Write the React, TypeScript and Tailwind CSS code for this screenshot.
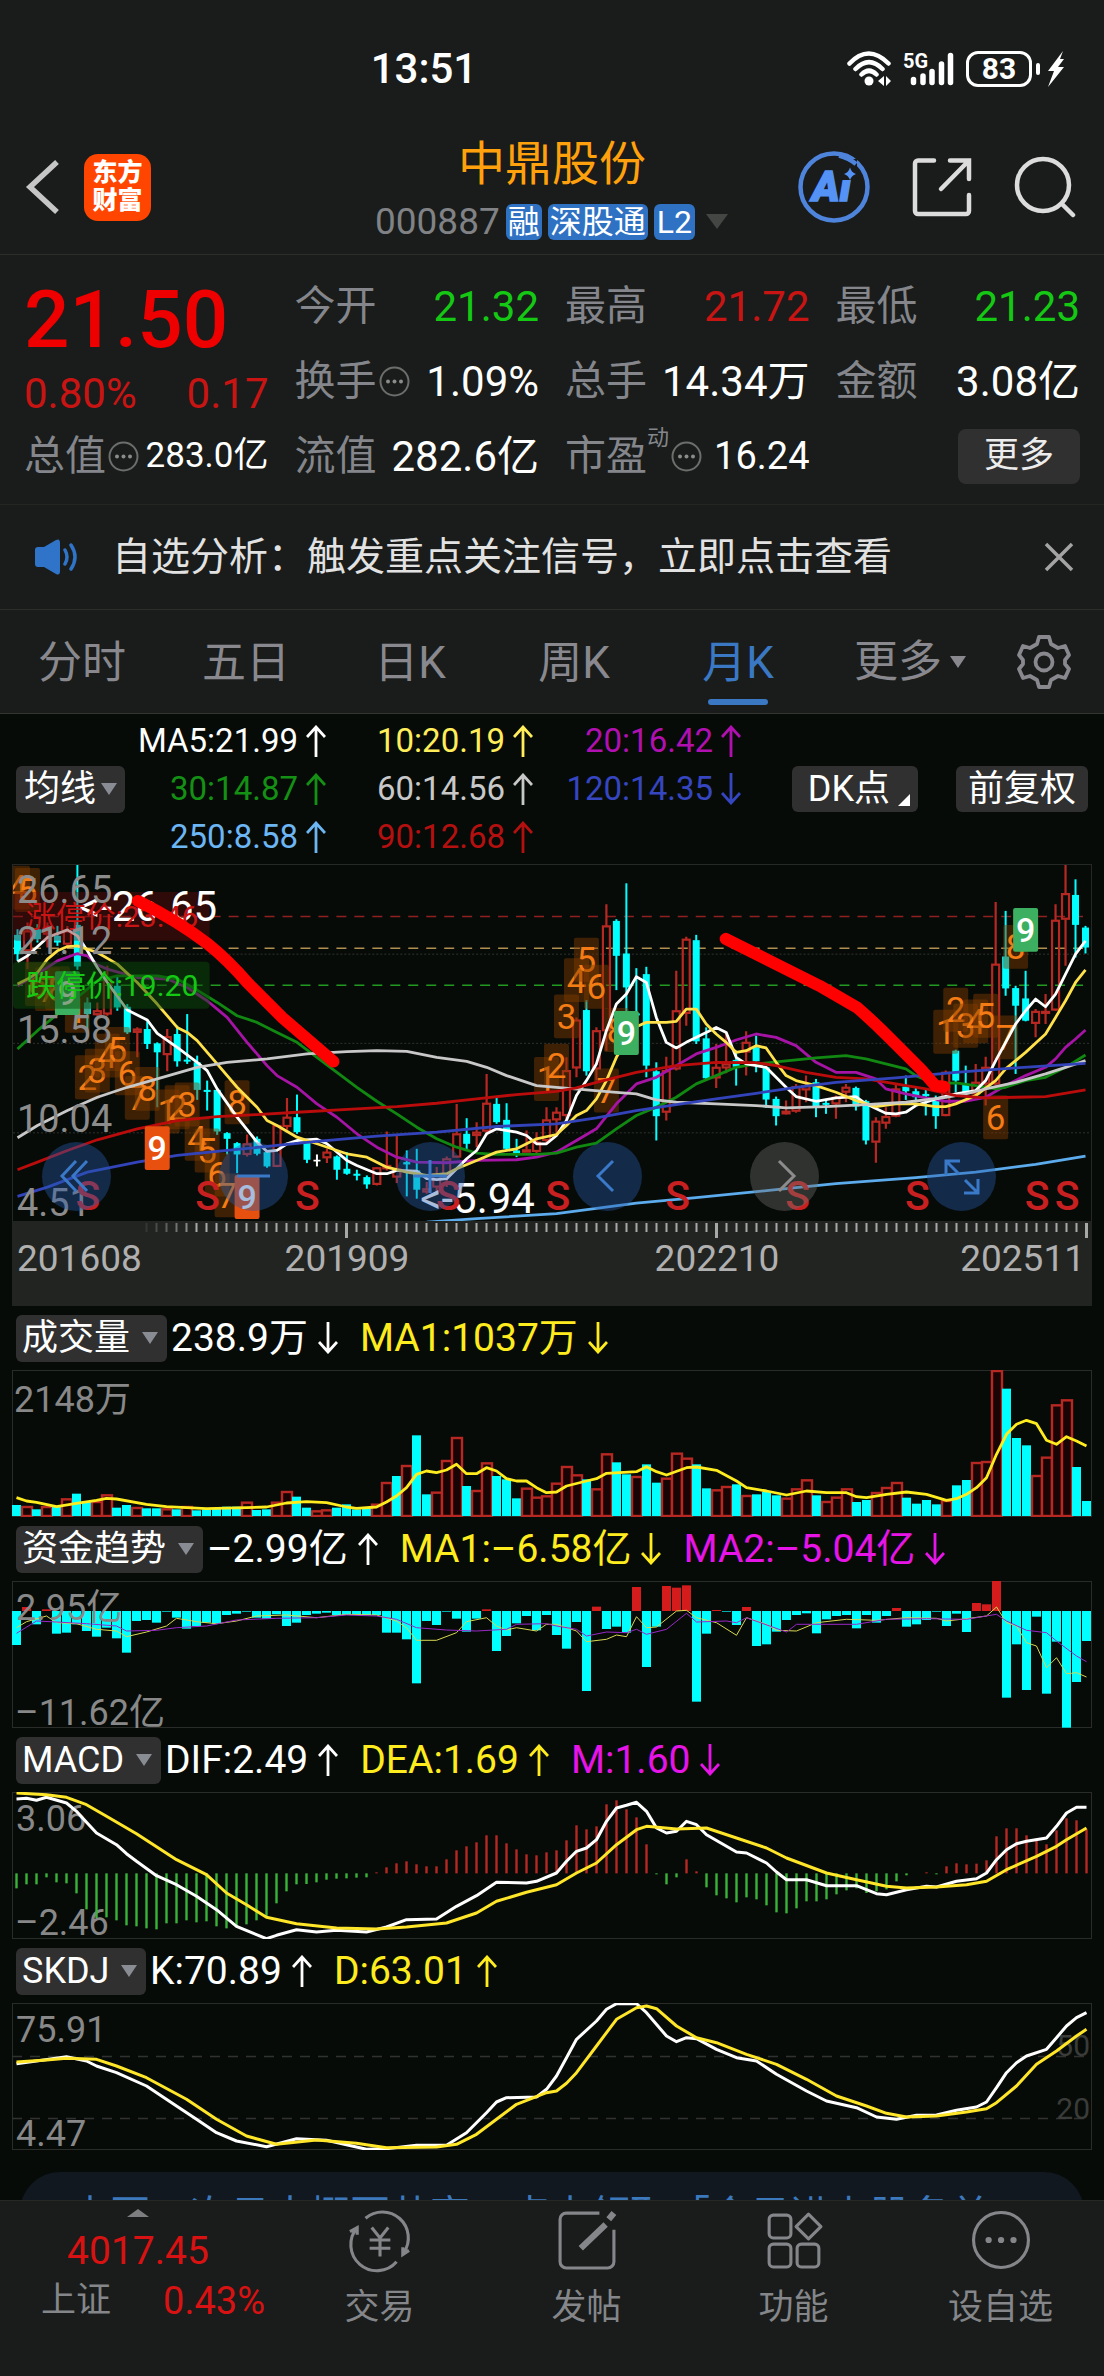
import type { ReactNode } from "react";
import { useState } from "react";

type Point = [index: number, value: number];
type Tone = "up" | "down" | "flat";
type Candle = [tone: Tone, high: number, top: number, bottom: number, low: number];

const CHART_WIDTH = 1080;
const CYAN = "#00ffff";
const RED = "#b82822";

// One month every 10 units, the first one centred at 4.5
const toX = (index: number) => 4.5 + index * 10;

// Chart values are stored in thirds of a unit, counted down from `top`
const toY = (value: number, top: number) => (value - top) / 3;

function toPath(points: Point[], top: number) {
	return points
		.map(([i, v], n) => `${n === 0 ? "M" : "L"}${toX(i)} ${toY(v, top).toFixed(1)}`)
		.join("");
}

const U: Tone = "up";
const D: Tone = "down";
const F: Tone = "flat";

const CANDLES: Candle[] = [
	[D, 235, 252, 310, 330], [U, 215, 240, 300, 355], [D, 220, 235, 265, 275], [U, 215, 240, 250, 290],
	[D, 225, 255, 275, 285], [U, 225, 240, 280, 290], [D, 42, 222, 347, 357], [D, 440, 455, 490, 540],
	[U, 455, 480, 492, 495], [U, 345, 385, 490, 495], [D, 375, 405, 470, 480], [D, 460, 468, 545, 550],
	[U, 530, 535, 545, 620], [D, 505, 535, 580, 595], [D, 575, 578, 605, 770], [U, 535, 558, 612, 662],
	[D, 525, 550, 632, 648], [D, 490, 627, 633, 640], [D, 615, 635, 718, 748], [D, 690, 718, 724, 780],
	[D, 715, 718, 843, 853], [D, 845, 848, 865, 912], [D, 875, 878, 912, 968], [U, 852, 880, 912, 918],
	[D, 858, 865, 910, 915], [D, 900, 905, 948, 952], [U, 825, 825, 948, 950], [U, 742, 800, 828, 838],
	[D, 732, 800, 845, 850], [D, 870, 875, 928, 938], [F, 912, 928, 933, 948], [U, 895, 905, 922, 938],
	[D, 915, 918, 958, 988], [D, 905, 955, 970, 973], [D, 958, 970, 976, 990], [D, 975, 980, 1002, 1015],
	[U, 950, 952, 1002, 1005], [U, 843, 945, 955, 960], [U, 855, 955, 980, 998], [D, 900, 935, 942, 1038],
	[D, 895, 960, 1018, 1045], [U, 995, 1015, 1025, 1030], [U, 950, 970, 1010, 1025], [U, 918, 925, 975, 1010],
	[U, 760, 850, 920, 922], [D, 803, 850, 880, 900], [U, 815, 845, 855, 890], [U, 670, 758, 842, 855],
	[D, 742, 760, 815, 820], [D, 758, 808, 895, 900], [D, 865, 900, 912, 920], [U, 840, 898, 905, 905],
	[U, 845, 875, 903, 910], [U, 770, 808, 870, 880], [U, 770, 785, 808, 850], [U, 620, 660, 795, 820],
	[U, 500, 508, 652, 680], [D, 448, 478, 662, 675], [U, 530, 540, 655, 690], [U, 160, 225, 540, 600],
	[D, 205, 210, 315, 418], [D, 97, 308, 410, 485], [D, 352, 488, 494, 505], [D, 348, 370, 645, 680],
	[D, 635, 662, 797, 870], [U, 618, 660, 785, 810], [U, 360, 480, 655, 660], [U, 258, 265, 488, 525],
	[D, 252, 268, 572, 580], [D, 530, 563, 683, 685], [U, 580, 650, 682, 712], [U, 545, 640, 652, 668],
	[D, 600, 628, 648, 705], [U, 542, 575, 604, 675], [D, 555, 590, 632, 665], [D, 648, 650, 747, 772],
	[D, 738, 745, 797, 825], [U, 750, 782, 790, 792], [U, 700, 708, 782, 787], [U, 675, 705, 718, 755],
	[D, 685, 695, 768, 800], [D, 745, 757, 763, 790], [U, 735, 740, 760, 805], [U, 700, 710, 725, 755],
	[D, 708, 712, 768, 780], [D, 748, 752, 870, 882], [U, 800, 812, 875, 937], [U, 770, 798, 818, 835],
	[U, 700, 715, 797, 800], [D, 675, 708, 722, 748], [D, 712, 722, 740, 755], [D, 718, 730, 737, 795],
	[D, 735, 750, 797, 835], [U, 660, 665, 795, 797], [D, 597, 600, 690, 725], [D, 645, 700, 730, 740],
	[U, 640, 695, 730, 740], [U, 618, 650, 700, 765], [U, 153, 340, 700, 705], [D, 180, 317, 413, 435],
	[D, 405, 412, 465, 670], [D, 360, 443, 510, 512], [U, 475, 482, 518, 560], [U, 430, 482, 487, 520],
	[U, 160, 208, 478, 480], [U, 42, 128, 205, 345], [D, 85, 132, 222, 320], [D, 225, 230, 290, 308],
];

const MA_LINES: { name: string; color: string; points: Point[] }[] = [
	{ name: "MA250", color: "#5cabec", points: [[41, 1115], [46, 1105], [54, 1090], [62, 1058], [68, 1042], [76, 1018], [82, 1000], [90, 982], [96, 965], [102, 942], [107, 917]] },
	{ name: "MA20", color: "#a614a6", points: [[0, 405], [2, 370], [4, 330], [6, 308], [7, 315], [8, 342], [9, 355], [12, 380], [15, 385], [17, 410], [19, 450], [21, 500], [23, 575], [25, 645], [26, 675], [28, 710], [30, 760], [32, 800], [34, 850], [36, 890], [38, 920], [40, 935], [43, 937], [46, 930], [50, 928], [52, 920], [54, 905], [56, 870], [58, 835], [60, 760], [62, 700], [64, 680], [66, 645], [68, 610], [70, 590], [72, 568], [74, 550], [76, 560], [78, 585], [80, 635], [82, 665], [84, 665], [86, 685], [87, 715], [89, 730], [91, 742], [93, 752], [95, 752], [97, 740], [99, 705], [101, 675], [103, 650], [104, 625], [105, 590], [106, 565], [107, 538]] },
	{ name: "MA30", color: "#118811", points: [[0, 595], [2, 540], [4, 490], [6, 440], [8, 390], [10, 375], [14, 375], [16, 385], [18, 418], [20, 455], [22, 495], [24, 515], [26, 545], [28, 575], [30, 620], [32, 665], [34, 710], [36, 752], [38, 790], [40, 830], [42, 865], [44, 890], [46, 908], [48, 912], [52, 912], [54, 908], [56, 890], [58, 878], [60, 835], [62, 795], [64, 770], [66, 740], [68, 700], [70, 675], [72, 650], [74, 640], [78, 628], [80, 622], [83, 615], [85, 625], [87, 640], [89, 655], [90, 675], [92, 700], [94, 697], [96, 705], [98, 715], [99, 710], [101, 690], [103, 680], [105, 650], [107, 613]] },
	{ name: "MA5", color: "#ffffff", points: [[0, 333], [1, 315], [3, 260], [4, 248], [5, 237], [6, 255], [7, 300], [8, 350], [9, 395], [11, 478], [13, 508], [14, 548], [16, 590], [18, 635], [19, 660], [20, 715], [22, 800], [24, 875], [25, 903], [26, 900], [27, 880], [28, 870], [30, 866], [31, 880], [33, 930], [34, 945], [36, 970], [37, 970], [38, 960], [40, 962], [41, 985], [42, 988], [43, 985], [45, 925], [46, 900], [47, 850], [48, 835], [50, 845], [51, 855], [52, 880], [53, 880], [54, 855], [55, 810], [56, 735], [57, 690], [58, 640], [59, 540], [60, 460], [61, 430], [62, 378], [63, 395], [64, 500], [65, 575], [66, 592], [67, 575], [69, 545], [70, 530], [71, 545], [72, 620], [73, 640], [74, 645], [75, 650], [77, 710], [78, 738], [80, 752], [82, 742], [84, 738], [85, 760], [87, 788], [88, 790], [89, 785], [90, 765], [91, 755], [92, 745], [94, 730], [96, 720], [97, 690], [98, 630], [99, 575], [100, 520], [101, 480], [102, 445], [103, 468], [104, 430], [105, 370], [106, 310], [107, 270]] },
	{ name: "MA10", color: "#ffe14a", points: [[0, 400], [1, 385], [2, 365], [3, 325], [4, 300], [5, 287], [6, 285], [8, 305], [10, 340], [12, 395], [14, 460], [16, 530], [17, 545], [18, 570], [20, 640], [22, 710], [24, 770], [25, 810], [26, 825], [28, 860], [30, 880], [32, 900], [33, 910], [35, 920], [37, 950], [39, 965], [41, 975], [43, 970], [44, 955], [46, 930], [48, 905], [50, 895], [52, 865], [54, 852], [55, 825], [56, 795], [57, 780], [58, 745], [59, 690], [60, 620], [61, 570], [62, 528], [63, 515], [65, 515], [66, 512], [67, 475], [68, 475], [69, 520], [70, 550], [71, 575], [72, 605], [73, 600], [74, 585], [75, 592], [76, 635], [77, 675], [78, 690], [80, 705], [82, 725], [84, 750], [86, 768], [88, 760], [90, 760], [92, 768], [93, 768], [94, 760], [96, 735], [98, 690], [99, 655], [101, 605], [103, 550], [104, 500], [105, 450], [106, 395], [107, 357]] },
	{ name: "MA60", color: "#c8c8c8", points: [[0, 862], [2, 825], [5, 780], [8, 740], [11, 710], [14, 685], [18, 650], [21, 635], [25, 625], [29, 610], [33, 603], [36, 600], [39, 602], [42, 620], [45, 632], [47, 650], [49, 675], [52, 705], [54, 710], [57, 718], [60, 725], [62, 730], [64, 748], [66, 755], [70, 760], [74, 765], [77, 772], [81, 768], [85, 762], [89, 755], [93, 740], [95, 730], [97, 715], [100, 695], [103, 670], [105, 650], [107, 630]] },
	{ name: "MA90", color: "#bb0c0c", points: [[0, 958], [2, 935], [5, 900], [8, 868], [12, 835], [16, 810], [20, 798], [24, 792], [28, 785], [34, 775], [38, 768], [42, 758], [46, 745], [50, 732], [54, 722], [56, 712], [58, 695], [62, 665], [66, 645], [70, 635], [74, 636], [76, 645], [79, 665], [82, 680], [85, 685], [88, 700], [91, 715], [94, 735], [97, 742], [100, 740], [103, 738], [107, 718]] },
	{ name: "MA120", color: "#3344bb", points: [[0, 1038], [3, 1010], [7, 965], [12, 935], [16, 915], [21, 900], [25, 888], [30, 873], [36, 857], [42, 845], [48, 828], [54, 820], [58, 802], [62, 780], [66, 762], [70, 745], [74, 728], [78, 710], [82, 695], [88, 682], [94, 665], [100, 652], [107, 638]] },
];

// Nine-turn counts: month, vertical centre, digit
const COUNTS: [number, number, string][] = [
	[0, 110, "4"], [1, 117, "5"], [2, 400, "6"], [3, 415, "7"], [4, 412, "8"], [6, 480, "1"],
	[7, 680, "2"], [8, 660, "3"], [9, 615, "4"], [10, 595, "5"], [11, 668, "6"], [12, 742, "7"], [13, 715, "8"],
	[15, 783, "1"], [16, 770, "2"], [17, 762, "3"], [18, 865, "4"], [19, 900, "5"], [20, 972, "6"], [21, 1035, "7"], [22, 755, "8"],
	[53, 685, "1"], [54, 645, "2"], [55, 497, "3"], [56, 388, "4"], [57, 327, "5"], [58, 408, "6"], [59, 720, "7"], [60, 538, "8"],
	[93, 543, "1"], [94, 477, "2"], [95, 525, "3"], [96, 512, "4"], [97, 495, "5"], [98, 800, "6"], [99, 560, "7"], [100, 288, "8"],
];

const NINES: [number, number, string][] = [
	[5, 427, "#3cb060"], [14, 893, "#e8500f"], [23, 1040, "#e8500f"], [61, 547, "#3cb060"], [101, 237, "#3cb060"],
];

const S_MARKS = [75, 195, 295, 436, 546, 666, 786, 906, 1026, 1056];

const VOLUME_TOPS = [
	612, 615, 625, 615, 618, 592, 578, 600, 600, 580, 620, 612, 618, 622, 622, 622, 625, 615, 628, 625,
	622, 617, 617, 602, 627, 625, 602, 570, 587, 620, 628, 625, 620, 610, 625, 622, 608, 543, 525, 492,
	403, 580, 572, 477, 408, 555, 567, 484, 525, 535, 592, 560, 587, 583, 545, 495, 520, 535, 562, 457,
	484, 520, 525, 490, 545, 530, 455, 470, 490, 562, 565, 555, 550, 582, 580, 572, 583, 590, 562, 535,
	583, 600, 587, 562, 603, 597, 573, 558, 543, 590, 608, 597, 610, 597, 553, 537, 483, 480, 207, 263,
	411, 433, 522, 467, 310, 295, 498, 600,
];

const VOLUME_UP = new Set([
	1, 3, 5, 8, 9, 12, 15, 17, 23, 26, 27, 30, 31, 36, 37, 39, 42, 43, 44, 46, 47, 51, 52, 53, 54, 55, 56, 58, 59, 62, 65, 66,
	67, 70, 71, 73, 77, 78, 79, 81, 82, 83, 86, 87, 88, 93, 96, 97, 98, 102, 103, 104, 105,
]);

const VOLUME_MA: Point[] = [[0, 590], [1, 600], [2, 604], [4, 617], [6, 607], [8, 598], [9, 592], [10, 594], [13, 610], [15, 617], [19, 623], [23, 620], [25, 618], [27, 606], [29, 602], [31, 605], [33, 618], [34, 622], [36, 618], [37, 603], [38, 585], [39, 560], [40, 520], [41, 510], [42, 515], [43, 507], [44, 490], [45, 518], [46, 518], [47, 500], [48, 510], [49, 533], [50, 540], [51, 540], [52, 560], [53, 575], [54, 573], [55, 555], [57, 540], [58, 533], [59, 517], [62, 512], [63, 497], [64, 512], [65, 522], [67, 500], [68, 498], [70, 508], [72, 540], [73, 560], [75, 570], [77, 582], [79, 570], [81, 575], [83, 575], [84, 587], [85, 590], [87, 580], [89, 573], [91, 580], [93, 598], [94, 593], [95, 580], [96, 560], [97, 530], [98, 460], [99, 400], [100, 370], [101, 358], [102, 368], [103, 418], [104, 430], [105, 407], [106, 420], [107, 435]];

const FUND_ENDS = [
	1032, 918, 970, 925, 998, 995, 970, 990, 1007, 980, 1012, 1055, 960, 957, 965, 932, 950, 983, 975, 965,
	968, 942, 938, 932, 950, 953, 940, 975, 965, 942, 938, 935, 942, 942, 942, 942, 942, 995, 995, 1015,
	1147, 960, 972, 932, 953, 992, 953, 925, 1050, 1005, 967, 945, 988, 942, 1002, 1043, 963, 1170, 917, 984,
	977, 995, 858, 1098, 977, 855, 860, 853, 1202, 998, 927, 932, 972, 918, 1035, 1030, 992, 957, 942, 937,
	997, 955, 945, 942, 982, 942, 965, 945, 921, 977, 970, 957, 932, 975, 938, 993, 906, 910, 840, 1190,
	1030, 1167, 947, 1178, 1022, 1280, 1143, 1020,
];

const FUND_MA1: Point[] = [[0, 980], [1, 962], [3, 945], [4, 965], [6, 968], [8, 985], [10, 990], [11, 1007], [13, 993], [15, 975], [16, 952], [18, 962], [20, 968], [22, 960], [24, 945], [27, 942], [30, 950], [33, 940], [36, 942], [38, 960], [39, 980], [40, 1018], [42, 1018], [44, 995], [45, 962], [47, 950], [48, 975], [49, 987], [50, 980], [52, 990], [53, 970], [54, 970], [56, 990], [57, 1022], [59, 1015], [60, 1002], [61, 1007], [62, 947], [63, 980], [64, 978], [66, 930], [67, 928], [68, 950], [70, 965], [72, 1003], [73, 950], [75, 970], [76, 988], [78, 990], [80, 965], [83, 955], [86, 958], [89, 950], [92, 952], [93, 960], [95, 953], [97, 945], [98, 918], [99, 965], [100, 975], [101, 1025], [102, 1035], [103, 1100], [104, 1070], [105, 1118], [106, 1115], [107, 1128]];

const FUND_MA2: Point[] = [[0, 997], [2, 960], [4, 963], [7, 968], [10, 975], [11, 990], [14, 988], [16, 980], [19, 975], [22, 957], [26, 952], [30, 950], [33, 942], [36, 945], [38, 955], [40, 980], [43, 987], [46, 990], [49, 985], [50, 970], [53, 968], [54, 975], [56, 985], [57, 1005], [59, 993], [61, 995], [62, 985], [63, 1000], [65, 985], [67, 937], [68, 963], [71, 960], [72, 965], [73, 950], [77, 993], [78, 970], [81, 970], [84, 970], [87, 955], [91, 953], [95, 955], [98, 940], [99, 960], [101, 988], [103, 995], [104, 1020], [106, 1065], [107, 1082]];

const MACD_ENDS = [
	456, 444, 444, 423, 438, 441, 471, 519, 545, 543, 552, 567, 570, 576, 579, 561, 561, 552, 558, 555,
	570, 576, 570, 564, 552, 540, 501, 465, 444, 443, 438, 430, 427, 426, 424, 423, 408, 393, 381, 375,
	384, 390, 390, 369, 342, 330, 318, 297, 297, 321, 339, 354, 357, 348, 342, 312, 267, 279, 270, 204,
	192, 219, 243, 324, 414, 444, 423, 369, 405, 453, 477, 486, 498, 483, 489, 507, 528, 531, 516, 495,
	495, 489, 474, 462, 456, 470, 465, 459, 435, 417, 411, 408, 414, 390, 381, 384, 382, 372, 300, 276,
	276, 297, 309, 324, 282, 246, 252, 279,
];

const MACD_DIF: Point[] = [[0, 188], [1, 186], [2, 192], [3, 183], [5, 200], [6, 225], [7, 258], [8, 290], [10, 325], [11, 352], [12, 375], [14, 418], [16, 445], [18, 480], [20, 520], [22, 570], [24, 595], [25, 607], [26, 597], [28, 580], [30, 587], [32, 582], [35, 587], [37, 572], [39, 550], [42, 548], [44, 510], [46, 478], [48, 438], [51, 440], [52, 435], [54, 410], [55, 375], [56, 345], [57, 335], [58, 310], [59, 255], [60, 215], [61, 207], [62, 198], [63, 225], [64, 275], [65, 290], [66, 285], [67, 255], [68, 265], [69, 295], [71, 330], [72, 347], [73, 350], [75, 380], [76, 407], [77, 430], [79, 430], [81, 448], [84, 448], [86, 472], [87, 475], [89, 460], [91, 450], [92, 452], [94, 435], [96, 427], [97, 410], [98, 370], [99, 340], [100, 322], [101, 315], [103, 305], [104, 270], [105, 230], [106, 213], [107, 213]];

const MACD_DEA: Point[] = [[0, 170], [3, 175], [5, 183], [7, 205], [9, 240], [12, 292], [16, 370], [19, 415], [21, 470], [23, 505], [25, 543], [28, 562], [32, 575], [36, 578], [39, 572], [43, 560], [46, 530], [48, 495], [51, 468], [54, 445], [56, 410], [58, 380], [60, 325], [62, 280], [63, 270], [66, 278], [69, 275], [72, 305], [75, 335], [77, 365], [81, 410], [84, 430], [87, 450], [89, 455], [92, 452], [95, 445], [97, 435], [99, 400], [102, 360], [104, 330], [105, 310], [107, 275]];

const SKDJ_K: Point[] = [[0, 983], [2, 975], [5, 962], [7, 975], [8, 990], [10, 1010], [13, 1050], [16, 1110], [18, 1150], [20, 1190], [22, 1215], [25, 1232], [28, 1208], [31, 1213], [35, 1240], [37, 1238], [40, 1228], [43, 1228], [45, 1190], [47, 1130], [48, 1098], [49, 1085], [52, 1083], [53, 1060], [54, 1020], [55, 965], [56, 910], [58, 855], [59, 820], [60, 803], [62, 803], [63, 830], [65, 900], [66, 917], [67, 905], [68, 908], [70, 940], [72, 965], [74, 975], [76, 1015], [79, 1065], [81, 1095], [84, 1115], [86, 1143], [88, 1150], [90, 1138], [92, 1137], [94, 1123], [96, 1113], [97, 1098], [98, 1055], [99, 1010], [100, 980], [101, 960], [103, 940], [104, 905], [105, 870], [106, 845], [107, 830]];

const SKDJ_D: Point[] = [[0, 978], [3, 972], [5, 967], [8, 970], [10, 990], [13, 1025], [17, 1090], [20, 1150], [23, 1200], [26, 1225], [30, 1212], [34, 1222], [37, 1235], [42, 1233], [44, 1225], [46, 1195], [48, 1150], [50, 1105], [53, 1070], [54, 1065], [55, 1042], [56, 1010], [58, 930], [60, 850], [62, 815], [63, 810], [64, 818], [66, 870], [68, 905], [70, 920], [73, 955], [76, 985], [79, 1030], [82, 1080], [85, 1110], [87, 1132], [89, 1143], [92, 1140], [95, 1128], [97, 1118], [98, 1100], [100, 1050], [102, 985], [104, 945], [106, 900], [107, 880]];

function StatusBar() {
	return (
		<div className="grid grid-cols-3 items-center pt-[43px] pr-10 pb-[17px] pl-6 text-white">
			<span />
			<span className="text-[42px] leading-[52px] font-medium">13:51</span>
			<div className="flex items-center justify-end gap-3">
				<svg className="h-9 w-11" viewBox="0 0 44 36" fill="none" stroke="currentColor" strokeWidth="4.500" strokeLinecap="round">
					<path d="M2.500 12.500Q21.500 -7.500 41.500 12.500M8.500 18Q22 4.500 35.500 18M14.500 23.500Q22 16 29.500 23.500" />
					<circle cx="22" cy="30" r="4.500" fill="currentColor" stroke="none" />
					<path d="M37 25v10l-6-5zM39 25v10l5-5z" fill="currentColor" stroke="none" />
				</svg>
				<svg className="h-9 w-[51px] overflow-visible" viewBox="0 0 51 36" fill="none" stroke="currentColor" strokeWidth="5.500" strokeLinecap="round">
					<text x="0" y="17" fontSize="20" fontWeight="700" fill="currentColor" stroke="none">5G</text>
					<path d="M10.500 28.500v3M20 25v6.500M29 20.500v11M38.500 13v18.500M47.500 4.500v27" />
				</svg>
				<div className="flex items-center gap-1">
					<span className="flex h-9 w-[66px] items-center justify-center rounded-xl border-3 border-white text-[30px] leading-8 font-bold">83</span>
					<span className="h-3 w-1 rounded-full bg-white" />
					<svg className="ml-1 h-9 w-4" viewBox="0 0 16 36" fill="currentColor" aria-hidden="true">
						<path d="M15 0L0 20h6L0 36l16-20H10l6-8h-4z" />
					</svg>
				</div>
			</div>
		</div>
	);
}

function Header() {
	return (
		<header className="grid h-[143px] grid-cols-[1fr_auto_1fr] items-center border-b border-[#2c2e2c] px-6 pt-2">
			<div className="flex items-center gap-6">
				<button type="button" aria-label="返回" className="text-[#c6c6c6]">
					<svg className="h-14 w-9" viewBox="0 0 36 56" fill="none" stroke="currentColor" strokeWidth="5.500">
						<path d="M33 3L6 28l27 25" />
					</svg>
				</button>
				<a href="#home" className="flex size-[67px] flex-col items-center justify-center rounded-[14px] bg-[#ff4500] text-[25px] leading-7 font-black text-white">
					<span>东方</span>
					<span>财富</span>
				</a>
			</div>

			<div className="flex flex-col items-center gap-[10px]">
				<h1 className="text-[47px] leading-[60px] text-[#ffa10c]">中鼎股份</h1>
				<div className="flex items-center gap-[6px] text-[32px] leading-9 text-white">
					<span className="text-[37px] text-[#808285]">000887</span>
					<span className="rounded-md bg-[#2f72c4] px-[2px]">融</span>
					<span className="rounded-md bg-[#2f72c4] px-[2px]">深股通</span>
					<span className="rounded-md bg-[#2f72c4] px-[3px]">L2</span>
					<svg className="ml-1 h-4 w-6" viewBox="0 0 24 16" fill="#444644" aria-hidden="true">
						<path d="M1 0h22L12 15z" />
					</svg>
				</div>
			</div>

			<div className="flex items-center justify-end gap-[42px] pr-1">
				<button type="button" aria-label="AI">
					<svg className="size-[72px]" viewBox="0 0 72 72" fill="none">
						<circle cx="36" cy="36" r="33.500" stroke="#4f84dc" strokeWidth="4.500" />
						<text x="14" y="50" fontSize="42" fontWeight="900" fontStyle="italic" fill="#5592f5" stroke="#5592f5" strokeWidth="1.500">Ai</text>
						<path d="M41 8h18v21H41z" fill="#191c1a" />
						<path d="M52 16.500q1.500 5 6 6.500-4.500 1.500-6 6-1.500-4.500-6-6 4.500-1.500 6-6.500z" fill="#5592f5" />
						<path d="M41 4.500Q51 7 58 13" stroke="#4f84dc" strokeWidth="4.500" />
					</svg>
				</button>
				<button type="button" aria-label="分享" className="text-[#dcdcdc]">
					<svg className="size-[60px]" viewBox="0 0 60 60" fill="none" stroke="currentColor" strokeWidth="4.500" strokeLinecap="round">
						<path d="M22 3.500H6a3 3 0 0 0-3 3V54a3 3 0 0 0 3 3h48a3 3 0 0 0 3-3V38M38 3.500h19V22M56 4.500L29 32" />
					</svg>
				</button>
				<button type="button" aria-label="搜索" className="text-[#dcdcdc]">
					<svg className="size-[62px]" viewBox="0 0 62 62" fill="none" stroke="currentColor" strokeWidth="4.500" strokeLinecap="round">
						<circle cx="29" cy="29" r="26" />
						<path d="M48 48l11 11" />
					</svg>
				</button>
			</div>
		</header>
	);
}

function InfoDots() {
	return (
		<svg className="mx-[2px] size-[31px] shrink-0" viewBox="0 0 31 31" fill="none" aria-hidden="true">
			<circle cx="15.500" cy="15.500" r="14" stroke="#6c6e6c" strokeWidth="2" />
			<g fill="#8a8c8a">
				<circle cx="9" cy="15.500" r="2" />
				<circle cx="15.500" cy="15.500" r="2" />
				<circle cx="22" cy="15.500" r="2" />
			</g>
		</svg>
	);
}

function Quote({ label, value, className, extra }: { label: string; value: string; className: string; extra?: ReactNode }) {
	return (
		<div className="flex h-[75px] items-center justify-between whitespace-nowrap">
			<dt className="flex items-center text-[41px] text-[#84868c]">
				{label}
				{extra}
			</dt>
			<dd className={className}>{value}</dd>
		</div>
	);
}

function QuotePanel() {
	const value = "text-[42px] text-white";
	return (
		<section className="border-b border-[#232623] px-6 pt-[14px] pb-[10px]">
			<dl className="grid grid-cols-4 gap-x-[26px]">
				<div className="row-span-2 flex flex-col whitespace-nowrap">
					<span className="text-[80px] leading-[102px] font-medium text-[#ee0000]">21.50</span>
					<span className="flex justify-between text-[42px] leading-[46px] text-[#c91414]">
						<span>0.80%</span>
						<span>0.17</span>
					</span>
				</div>
				<Quote label="今开" value="21.32" className="text-[42px] text-[#14c814]" />
				<Quote label="最高" value="21.72" className="text-[42px] text-[#c91414]" />
				<Quote label="最低" value="21.23" className="text-[42px] text-[#14c814]" />
				<Quote label="换手" value="1.09%" className={value} extra={<InfoDots />} />
				<Quote label="总手" value="14.34万" className={value} />
				<Quote label="金额" value="3.08亿" className={value} />
				<Quote label="总值" value="283.0亿" className="text-[35px] text-white" extra={<InfoDots />} />
				<Quote label="流值" value="282.6亿" className={value} />
				<Quote
					label="市盈"
					value="16.24"
					className="text-[38px] text-white"
					extra={
						<>
							<span className="self-start text-[22px] leading-6">动</span>
							<InfoDots />
						</>
					}
				/>
				<div className="flex h-[75px] items-center justify-end">
					<button type="button" className="h-[55px] rounded-lg bg-[#303030] px-[26px] text-[35px] text-[#ececec]">
						更多
					</button>
				</div>
			</dl>
		</section>
	);
}

function Notice() {
	return (
		<div className="flex h-[105px] items-center border-b border-[#2c2e2c] pr-[30px] pl-[34px]">
			<svg className="h-9 w-11" viewBox="0 0 44 36" fill="none" aria-hidden="true">
				<path d="M1 11a3 3 0 0 1 3-3h6L22 1q4-2 4 3v28q0 5-4 3l-12-7H4a3 3 0 0 1-3-3z" fill="#2f74c8" />
				<path d="M31 11q4 7 0 14M37 6q8 12 0 24" stroke="#2f74c8" strokeWidth="3.500" strokeLinecap="round" />
			</svg>
			<a href="#signals" className="ml-[34px] flex-1 text-[39px] whitespace-nowrap text-[#e2e2e2]">
				自选分析：触发重点关注信号，立即点击查看
			</a>
			<button type="button" aria-label="关闭" className="text-[#a4a4a4]">
				<svg className="size-[30px]" viewBox="0 0 30 30" fill="none" stroke="currentColor" strokeWidth="3.500">
					<path d="M2 2l26 26M28 2L2 28" />
				</svg>
			</button>
		</div>
	);
}

const PERIODS = ["分时", "五日", "日K", "周K", "月K"];

function PeriodTabs() {
	const [period, setPeriod] = useState("月K");
	return (
		<nav className="flex h-[104px] items-stretch border-b border-[#333533] text-[44px] text-[#88888e]">
			<div className="grid flex-1 grid-cols-6">
				{PERIODS.map((name) => (
					<button
						key={name}
						type="button"
						onClick={() => setPeriod(name)}
						className={`flex flex-col items-center justify-end pb-2 ${name === period ? "text-[#3a78c4]" : ""}`}
					>
						<span className="leading-[72px]">{name}</span>
						<span className={`h-[6px] w-[60px] rounded-full ${name === period ? "bg-[#3a78c4]" : ""}`} />
					</button>
				))}
				<button type="button" className="flex items-center justify-center gap-2 pl-4">
					更多
					<svg className="h-3 w-4" viewBox="0 0 16 12" fill="currentColor" aria-hidden="true">
						<path d="M0 0h16L8 12z" />
					</svg>
				</button>
			</div>
			<button type="button" aria-label="设置" className="flex w-[120px] items-center justify-center">
				<svg className="h-[54px] w-[54px]" viewBox="0 0 54 54" fill="none" stroke="currentColor" strokeWidth="3.800" strokeLinejoin="round">
					<path d="M22 2h10l2 7 7 4 7-2 4 9-4 5v4l4 5-4 9-7-2-7 4-2 7H22l-2-7-7-4-7 2-4-9 4-5v-4l-4-5 4-9 7 2 7-4z" />
					<circle cx="27" cy="27" r="8.500" />
				</svg>
			</button>
		</nav>
	);
}

function Arrow({ down = false }: { down?: boolean }) {
	return (
		<svg className="h-8 w-5 shrink-0" viewBox="0 0 20 32" fill="none" stroke="currentColor" strokeWidth="2.800" aria-hidden="true">
			{down ? <path d="M10 0v29M1 20l9 10 9-10" /> : <path d="M10 32V3M1 12l9-10 9 10" />}
		</svg>
	);
}

function Picker({ label, option, compact = false }: { label: string; option: string; compact?: boolean }) {
	return (
		<span className="relative flex items-center">
			<select
				aria-label={label}
				className={`h-[47px] appearance-none rounded-md bg-[#303030] text-[36px] leading-[47px] text-white ${compact ? "pr-7 pl-2" : "pr-9 pl-[6px]"}`}
			>
				<option>{option}</option>
			</select>
			<svg
				className={`pointer-events-none absolute h-3 w-4 ${compact ? "right-2" : "right-[9px]"}`}
				viewBox="0 0 16 12"
				fill="#8a8c94"
				aria-hidden="true"
			>
				<path d="M0 0h16L8 12z" />
			</svg>
		</span>
	);
}

const AVERAGES = [
	{ text: "MA5:21.99", className: "text-white" },
	{ text: "10:20.19", className: "text-[#ffee5a]" },
	{ text: "20:16.42", className: "text-[#b010b0]" },
	{ text: "30:14.87", className: "text-[#149014]" },
	{ text: "60:14.56", className: "text-[#c8c8c8]" },
	{ text: "120:14.35", className: "text-[#3546c0]", down: true },
	{ text: "250:8.58", className: "text-[#6cb6f4]" },
	{ text: "90:12.68", className: "text-[#b41010]" },
];

function AverageBar() {
	return (
		<div className="flex h-[150px] items-center px-4">
			<Picker label="主图指标" option="均线" compact />
			<ul className="grid grid-cols-[201px_207px_208px] text-[33px] leading-[48px]">
				{AVERAGES.map(({ text, className, down }) => (
					<li key={text} className={`flex items-center justify-end gap-2 ${className}`}>
						{text}
						<Arrow down={down} />
					</li>
				))}
			</ul>
			<div className="ml-auto flex gap-[38px] text-[36px] leading-[46px] text-white">
				<button type="button" className="flex items-end gap-2 rounded-md bg-[#303030] pr-2 pl-4">
					DK点
					<svg className="mb-[6px] size-3" viewBox="0 0 12 12" fill="currentColor" aria-hidden="true">
						<path d="M12 0v12H0z" />
					</svg>
				</button>
				<button type="button" className="rounded-md bg-[#303030] px-3">
					前复权
				</button>
			</div>
		</div>
	);
}

function ChartText({ x, y, size, color, children, anchor = "start", weight = 400 }: {
	x: number;
	y: number;
	size: number;
	color: string;
	children: ReactNode;
	anchor?: "start" | "middle" | "end";
	weight?: number;
}) {
	return (
		<text x={x} y={y + size * 0.36} fontSize={size} fill={color} textAnchor={anchor} fontWeight={weight}>
			{children}
		</text>
	);
}

function CandleMark({ index, candle }: { index: number; candle: Candle }) {
	const [tone, high, top, bottom, low] = candle;
	const x = toX(index);
	const y = toY(top, 42);
	const height = toY(bottom, 42) - y;
	if (tone === "up") {
		return (
			<g stroke={RED} strokeWidth="2.200" fill="none">
				<path d={`M${x} ${toY(high, 42)}V${y}M${x} ${y + height}V${toY(low, 42)}`} />
				<rect x={x - 3.5} y={y + 0.5} width="7" height={Math.max(height - 1, 1)} />
			</g>
		);
	}
	const color = tone === "flat" ? "#ffffff" : CYAN;
	return (
		<g fill={color}>
			<rect x={x - 1} y={toY(high, 42)} width="2" height={toY(low, 42) - toY(high, 42)} />
			<rect x={x - 3.5} y={y} width="7" height={height} />
		</g>
	);
}

const CHART_BUTTONS = [
	{ label: "最左", d: "M34 19L20 34l14 15M45 19L31 34l14 15" },
	{ label: "缩小", d: "M18 34h33" },
	{ label: "放大", d: "M18 34h33M34 18v33" },
	{ label: "左移", d: "M40 19L25 34l15 15" },
	{ label: "右移", d: "M29 19l15 15-15 15", muted: true },
	{ label: "全屏", d: "M33 19H19v14M19 19l13 13M38 38l12 12M37 51h14V37" },
];

function CandleChart() {
	return (
		<section className="mx-3">
			<div className="relative border-x border-t border-[#262826]">
				<svg className="block w-full" viewBox={`0 0 ${CHART_WIDTH} 357`} role="img" aria-label="月K线">
					<g stroke="#303230" strokeDasharray="2 2">
						<path d={`M0 ${toY(310, 42)}H1080M0 ${toY(578, 42)}H1080M0 ${toY(847, 42)}H1080`} />
					</g>
					<g strokeWidth="1.500" strokeDasharray="10 8" fill="none">
						<path d="M0 51.500H1080" stroke="#8f2020" />
						<path d="M0 83.500H1080" stroke="#b09050" />
						<path d="M0 120.500H1080" stroke="#229a22" />
					</g>

					{CANDLES.map((candle, index) => (
						<CandleMark key={index} index={index} candle={candle} />
					))}

					{COUNTS.map(([index, value, digit]) => (
						<g key={index}>
							<rect x={toX(index) - 12.5} y={toY(value, 42) - 22} width="25" height="44" rx="2" fill="#823c00" fillOpacity="0.45" />
							<ChartText x={toX(index)} y={toY(value, 42)} size={35} color="#f57c14" anchor="middle">{digit}</ChartText>
						</g>
					))}

					{MA_LINES.map(({ name, color, points }) => (
						<path key={name} d={toPath(points, 42)} fill="none" stroke={color} strokeWidth="2.800" strokeLinejoin="round" />
					))}

					{NINES.map(([index, value, color]) => (
						<g key={index}>
							<rect x={toX(index) - 12.5} y={toY(value, 42) - 22} width="25" height="44" rx="2" fill={color} />
							<ChartText x={toX(index)} y={toY(value, 42)} size={34} color="#ffffff" anchor="middle" weight={500}>9</ChartText>
						</g>
					))}

					<rect x="0" y="27" width="197" height="49" rx="4" fill="#6a0a0a" fillOpacity="0.4" />
					<rect x="0" y="97" width="197" height="47" rx="4" fill="#0a4a0a" fillOpacity="0.5" />
					<ChartText x={66} y={41} size={42} color="#ffffff">{"<-26.65"}</ChartText>
					<ChartText x={408} y={334} size={42} color="#ffffff">{"<-5.94"}</ChartText>
					<ChartText x={13} y={51} size={30} color="#c81414">涨停价:23.46</ChartText>
					<ChartText x={13} y={120} size={30} color="#14c814">跌停价:19.20</ChartText>

					<ChartText x={4} y={24} size={38} color="#8c8c8c">26.65</ChartText>
					<ChartText x={4} y={75} size={38} color="#8c8c8c">21.12</ChartText>
					<ChartText x={4} y={165} size={38} color="#8c8c8c">15.58</ChartText>
					<ChartText x={4} y={254} size={38} color="#8c8c8c">10.04</ChartText>
					<ChartText x={4} y={338} size={38} color="#8c8c8c">4.51</ChartText>

					{S_MARKS.map((x) => (
						<ChartText key={x} x={x} y={331} size={41} color="#c82020" anchor="middle" weight={500}>S</ChartText>
					))}

					<g fill="none" stroke="#ff0000" strokeWidth="12" strokeLinecap="round" strokeLinejoin="round">
						<path d="M125 36Q165 56 195 79Q215 95 235 118L270 153L321 197" />
						<path d="M714 74L758 96L808 121L846 143Q862 157 878 173L910 205L924 221L933 222" />
					</g>
				</svg>

				<div className="absolute inset-x-0 bottom-[10px] flex justify-between pr-[95px] pl-[29px]">
					{CHART_BUTTONS.map(({ label, d, muted }) => (
						<button
							key={label}
							type="button"
							aria-label={label}
							className={`size-[69px] rounded-full ${muted ? "bg-[#6e6e6e]/40 text-[#8c8c8c]" : "bg-[#265aaa]/40 text-[#3a78c8]"}`}
						>
							<svg viewBox="0 0 69 69" fill="none" stroke="currentColor" strokeWidth="3">
								<path d={d} />
							</svg>
						</button>
					))}
				</div>
			</div>

			<svg className="block w-full bg-[#222422]" viewBox={`0 0 ${CHART_WIDTH} 85`} role="img" aria-label="时间轴">
				{CANDLES.map((_, index) => {
					if (index < 13) return null;
					const major = index === 33 || index === 70 || index === 107;
					return (
						<rect
							key={index}
							x={toX(index) - (major ? 1.5 : 1)}
							y="2"
							width={major ? 3 : 2}
							height={major ? 15 : 9}
							fill="#a8a8a8"
							opacity={index < 18 ? 0.15 * (index - 12) : 1}
						/>
					);
				})}
				<ChartText x={5} y={37} size={37} color="#b0b0b0">201608</ChartText>
				<ChartText x={335} y={37} size={37} color="#b0b0b0" anchor="middle">201909</ChartText>
				<ChartText x={705} y={37} size={37} color="#b0b0b0" anchor="middle">202210</ChartText>
				<ChartText x={1073} y={37} size={37} color="#b0b0b0" anchor="end">202511</ChartText>
			</svg>
		</section>
	);
}

interface Reading {
	text: string;
	className: string;
	down?: boolean;
}

function IndicatorPanel({ name, readings, children }: { name: string; readings: Reading[]; children: ReactNode }) {
	return (
		<section className="mx-3">
			<div className="flex h-16 items-center gap-[22px] pl-1 text-[39px] whitespace-nowrap">
				<div className="flex items-center gap-1 text-white">
					<Picker label="副图指标" option={name} />
					<Value reading={readings[0]} />
				</div>
				{readings.slice(1).map((reading) => (
					<Value key={reading.text} reading={reading} />
				))}
			</div>
			<svg className="block w-full" viewBox={`0 0 ${CHART_WIDTH} 147`} role="img" aria-label={name}>
				<rect x="0.5" y="0.5" width={CHART_WIDTH - 1} height="146" fill="none" stroke="#2a2c2a" />
				{children}
			</svg>
		</section>
	);
}

function Value({ reading }: { reading: Reading }) {
	return (
		<span className={`flex items-center gap-[10px] ${reading.className}`}>
			{reading.text}
			<Arrow down={reading.down} />
		</span>
	);
}

function Line({ points, top, color, width = 2.8 }: { points: Point[]; top: number; color: string; width?: number }) {
	return <path d={toPath(points, top)} fill="none" stroke={color} strokeWidth={width} strokeLinejoin="round" />;
}

function VolumePanel() {
	return (
		<IndicatorPanel
			name="成交量"
			readings={[
				{ text: "238.9万", className: "text-white", down: true },
				{ text: "MA1:1037万", className: "text-[#ffec1e]", down: true },
			]}
		>
			<ChartText x={2} y={29} size={36} color="#888888">2148万</ChartText>
			{VOLUME_TOPS.map((value, index) => {
				const y = toY(value, 207);
				return VOLUME_UP.has(index) ? (
					<rect key={index} x={toX(index) - 4.5} y={y + 1} width="10" height={145 - y} fill="#180404" stroke={RED} strokeWidth="2.400" />
				) : (
					<rect key={index} x={toX(index) - 4.5} y={y} width="9" height={146 - y} fill={CYAN} />
				);
			})}
			<Line points={VOLUME_MA} top={207} color="#ffec1e" />
		</IndicatorPanel>
	);
}

function FundPanel() {
	const zero = toY(930, 840);
	return (
		<IndicatorPanel
			name="资金趋势"
			readings={[
				{ text: "–2.99亿", className: "text-white" },
				{ text: "MA1:–6.58亿", className: "text-[#ffec1e]", down: true },
				{ text: "MA2:–5.04亿", className: "text-[#e614e6]", down: true },
			]}
		>
			{FUND_ENDS.map((value, index) => {
				const y = toY(value, 840);
				return (
					<rect
						key={index}
						x={toX(index) - 4.5}
						y={Math.min(y, zero)}
						width="9"
						height={Math.abs(y - zero)}
						fill={y < zero ? "#d41c1c" : CYAN}
					/>
				);
			})}
			<Line points={FUND_MA1} top={840} color="#d8d850" width={1} />
			<Line points={FUND_MA2} top={840} color="#9a28c8" width={1} />
			<ChartText x={4} y={26} size={36} color="#888888">2.95亿</ChartText>
			<ChartText x={3} y={131} size={36} color="#888888">–11.62亿</ChartText>
		</IndicatorPanel>
	);
}

function MacdPanel() {
	const zero = toY(411, 167);
	return (
		<IndicatorPanel
			name="MACD"
			readings={[
				{ text: "DIF:2.49", className: "text-white" },
				{ text: "DEA:1.69", className: "text-[#ffec1e]" },
				{ text: "M:1.60", className: "text-[#e614e6]", down: true },
			]}
		>
			<ChartText x={4} y={26} size={36} color="#888888">3.06</ChartText>
			<ChartText x={3} y={130} size={36} color="#888888">–2.46</ChartText>
			{MACD_ENDS.map((value, index) => (
				<path key={index} d={`M${toX(index)} ${zero}V${toY(value, 167)}`} stroke={value < 411 ? RED : "#38b438"} strokeWidth="2.400" />
			))}
			<Line points={MACD_DIF} top={167} color="#ffffff" width={3} />
			<Line points={MACD_DEA} top={167} color="#ffe628" width={3} />
		</IndicatorPanel>
	);
}

function SkdjPanel() {
	return (
		<IndicatorPanel
			name="SKDJ"
			readings={[
				{ text: "K:70.89", className: "text-white" },
				{ text: "D:63.01", className: "text-[#ffec1e]" },
			]}
		>
			<path d="M0 53.500H1080M0 115.500H1080" stroke="#303230" strokeDasharray="10 8" strokeWidth="1.500" />
			<ChartText x={4} y={26} size={36} color="#888888">75.91</ChartText>
			<ChartText x={4} y={130} size={36} color="#888888">4.47</ChartText>
			<ChartText x={1078} y={42} size={30} color="#3a3c3a" anchor="end">50</ChartText>
			<ChartText x={1078} y={105} size={30} color="#3a3c3a" anchor="end">20</ChartText>
			<Line points={SKDJ_K} top={801} color="#ffffff" width={3} />
			<Line points={SKDJ_D} top={801} color="#ffe628" width={3} />
		</IndicatorPanel>
	);
}

const ACTIONS: { label: string; icon: ReactNode }[] = [
	{
		label: "交易",
		icon: (
			<>
				<path d="M14 7a25 25 0 0 1 37 33M44 49a25 25 0 0 1-38-33M-1 20l7-4v7M56 38l-6 4v-7" />
				<path d="M20 16l8 10 8-10M28 26v18M18 28h20M18 36h20" />
			</>
		),
	},
	{
		label: "发帖",
		icon: (
			<>
				<path d="M40 2H8a6 6 0 0 0-6 6v41a6 6 0 0 0 6 6h40a6 6 0 0 0 6-6V18" />
				<path d="M49 8l5-6M46 13L22 36" strokeWidth="6" />
			</>
		),
	},
	{
		label: "功能",
		icon: (
			<>
				<rect x="4" y="4" width="21" height="22" rx="4" />
				<rect x="4" y="32" width="21" height="22" rx="4" />
				<rect x="31" y="32" width="21" height="22" rx="4" />
				<path d="M42 3l12 12-12 12-12-12z" strokeLinejoin="round" />
			</>
		),
	},
	{
		label: "设自选",
		icon: (
			<>
				<circle cx="28" cy="28" r="26.500" />
				<path d="M16 28h.1M28 28h.1M40 28h.1" strokeWidth="6" strokeLinecap="round" />
			</>
		),
	},
];

function BottomBar() {
	return (
		<nav className="flex h-[176px] shrink-0 items-start border-t border-[#262826] bg-[#191c1a]">
			<a href="#index" className="flex w-1/4 flex-col items-center pt-2">
				<svg className="h-2 w-[22px]" viewBox="0 0 22 8" fill="#7c7e80" aria-hidden="true">
					<path d="M11 0l11 8H0z" />
				</svg>
				<span className="mt-2 text-[39px] leading-[52px] text-[#d81212]">4017.45</span>
				<span className="flex items-center gap-[52px] pl-[30px] leading-[48px]">
					<span className="text-[35px] text-[#84868a]">上证</span>
					<span className="text-[38px] text-[#d81212]">0.43%</span>
				</span>
			</a>
			{ACTIONS.map(({ label, icon }) => (
				<button key={label} type="button" className="flex flex-1 flex-col items-center pt-[10px] text-[35px] leading-[52px] text-[#84868a]">
					<svg className="mb-[13px] size-[58px] overflow-visible" viewBox="0 0 56 56" fill="none" stroke="currentColor" strokeWidth="3">
						{icon}
					</svg>
					{label}
				</button>
			))}
		</nav>
	);
}

export default function App() {
	return (
		<div className="flex h-screen flex-col bg-[#191c1a] font-['Roboto','Noto_Sans_CJK_SC',sans-serif]">
			<StatusBar />
			<Header />
			<QuotePanel />
			<Notice />
			<PeriodTabs />
			<main className="min-h-0 flex-1 overflow-hidden bg-[#070b08]">
				<AverageBar />
				<CandleChart />
				<VolumePanel />
				<FundPanel />
				<MacdPanel />
				<SkdjPanel />
				<a href="#report" className="mx-5 mt-[22px] block rounded-[40px] bg-[#111820] px-[50px] py-[14px] text-[40px] leading-[60px] whitespace-nowrap text-[#3c78bc]">
					本页、次日大概更共享，点击领取「会云进上股名单」
				</a>
			</main>
			<BottomBar />
		</div>
	);
}
